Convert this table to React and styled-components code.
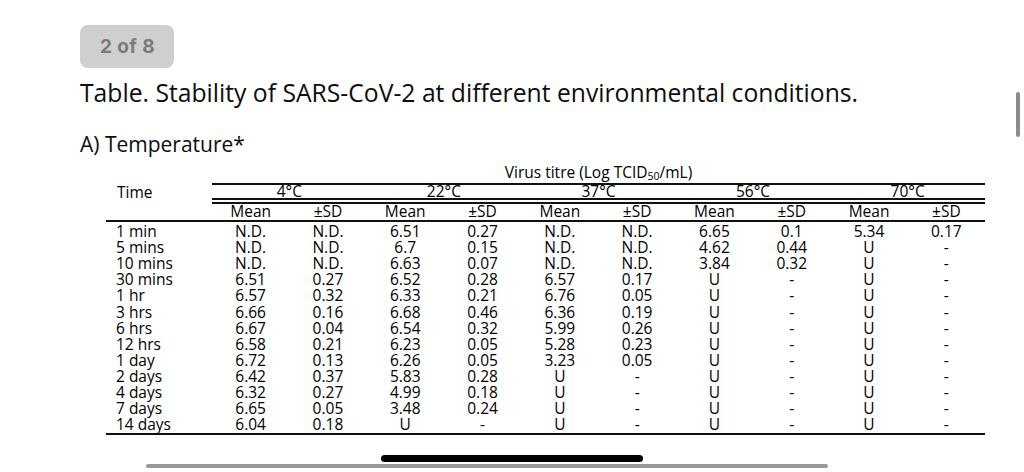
import React from "react";
import styled, { createGlobalStyle } from "styled-components";

const Global = createGlobalStyle`
  html, body { margin: 0; padding: 0; background: #ffffff; }
  * { box-sizing: border-box; }
`;

const Page = styled.div`
  position: relative;
  width: 1024px;
  height: 472px;
  overflow: hidden;
  background: #ffffff;
  padding: 25px 0 0 80px;
  font-family: "Open Sans", "Noto Sans", sans-serif;
  color: #0d0d0d;
`;

const Badge = styled.div`
  display: inline-flex;
  align-items: center;
  height: 43px;
  padding: 0 19px 0 20px;
  border-radius: 8px;
  background: #cfcfcf;
  color: #7b7b7b;
  font-family: Inter, "Liberation Sans", sans-serif;
  font-weight: 700;
  font-size: 19px;
  letter-spacing: 0.4px;
`;

const Title = styled.h1`
  margin: 8px 0 0 0;
  font-size: 24.7px;
  font-weight: 400;
  line-height: 33px;
  color: #0d0d0d;
`;

const Subtitle = styled.h2`
  margin: 20.5px 0 0 0;
  font-size: 21px;
  font-weight: 400;
  line-height: 28px;
  color: #0d0d0d;
`;

const Table = styled.div`
  margin: 5.2px 0 0 26px;
  width: 879px;
  font-size: 15.5px;
  color: #000000;
`;

const cols = "106px repeat(10, 77.3px)";

const TitreRow = styled.div`
  display: grid;
  grid-template-columns: 106px 1fr;
  height: 20.6px;
`;

const TitreCell = styled.div`
  border-bottom: 2px solid #111;
  text-align: center;
  line-height: 18.6px;
`;

const Sub = styled.sub`
  font-size: 10.5px;
  vertical-align: baseline;
  position: relative;
  top: 2px;
`;

const GroupRow = styled.div`
  display: grid;
  grid-template-columns: 106px repeat(5, 154.6px);
  height: 21px;
`;

const TimeHead = styled.div`
  padding: 2.5px 0 0 11px;
  line-height: 13px;
`;

const GroupCell = styled.div`
  border-bottom: 6px double #111;
  text-align: center;
  padding-top: 2px;
  line-height: 13px;
`;

const SubRow = styled.div`
  display: grid;
  grid-template-columns: ${cols};
  height: 17.7px;
  border-bottom: 2px solid #111;
  line-height: 15px;
  text-align: center;
`;

const Body = styled.div`
  padding-top: 1px;
  border-bottom: 2px solid #111;
`;

const DataRow = styled.div`
  display: grid;
  grid-template-columns: ${cols};
  height: 16.125px;
  line-height: 16.125px;
`;

const Cell = styled.div`
  text-align: ${(p) => (p.$left ? "left" : "center")};
  padding-left: ${(p) => (p.$left ? "10px" : "0")};
  white-space: nowrap;
`;

const SideIndicator = styled.div`
  position: absolute;
  left: 1016px;
  top: 92px;
  width: 4px;
  height: 45px;
  border-radius: 2px;
  background: #8c8c8c;
`;

const HomeBar = styled.div`
  position: absolute;
  left: 381px;
  top: 455px;
  width: 262px;
  height: 7px;
  border-radius: 4px;
  background: #000000;
`;

const ScrollBar = styled.div`
  position: absolute;
  left: 146px;
  top: 464px;
  width: 682px;
  height: 4px;
  border-radius: 2px;
  background: #999999;
`;

const groups = ["4°C", "22°C", "37°C", "56°C", "70°C"];

const rows = [
  ["1 min", "N.D.", "N.D.", "6.51", "0.27", "N.D.", "N.D.", "6.65", "0.1", "5.34", "0.17"],
  ["5 mins", "N.D.", "N.D.", "6.7", "0.15", "N.D.", "N.D.", "4.62", "0.44", "U", "-"],
  ["10 mins", "N.D.", "N.D.", "6.63", "0.07", "N.D.", "N.D.", "3.84", "0.32", "U", "-"],
  ["30 mins", "6.51", "0.27", "6.52", "0.28", "6.57", "0.17", "U", "-", "U", "-"],
  ["1 hr", "6.57", "0.32", "6.33", "0.21", "6.76", "0.05", "U", "-", "U", "-"],
  ["3 hrs", "6.66", "0.16", "6.68", "0.46", "6.36", "0.19", "U", "-", "U", "-"],
  ["6 hrs", "6.67", "0.04", "6.54", "0.32", "5.99", "0.26", "U", "-", "U", "-"],
  ["12 hrs", "6.58", "0.21", "6.23", "0.05", "5.28", "0.23", "U", "-", "U", "-"],
  ["1 day", "6.72", "0.13", "6.26", "0.05", "3.23", "0.05", "U", "-", "U", "-"],
  ["2 days", "6.42", "0.37", "5.83", "0.28", "U", "-", "U", "-", "U", "-"],
  ["4 days", "6.32", "0.27", "4.99", "0.18", "U", "-", "U", "-", "U", "-"],
  ["7 days", "6.65", "0.05", "3.48", "0.24", "U", "-", "U", "-", "U", "-"],
  ["14 days", "6.04", "0.18", "U", "-", "U", "-", "U", "-", "U", "-"],
];

export default function App() {
  return (
    <Page>
      <Global />
      <Badge>2 of 8</Badge>
      <Title>Table. Stability of SARS-CoV-2 at different environmental conditions.</Title>
      <Subtitle>A) Temperature*</Subtitle>
      <Table>
        <TitreRow>
          <div />
          <TitreCell>
            Virus titre (Log TCID<Sub>50</Sub>/mL)
          </TitreCell>
        </TitreRow>
        <GroupRow>
          <TimeHead>Time</TimeHead>
          {groups.map((g) => (
            <GroupCell key={g}>{g}</GroupCell>
          ))}
        </GroupRow>
        <SubRow>
          <div />
          {groups.map((g) => (
            <React.Fragment key={g}>
              <div>Mean</div>
              <div>±SD</div>
            </React.Fragment>
          ))}
        </SubRow>
        <Body>
          {rows.map((r) => (
            <DataRow key={r[0]}>
              {r.map((v, i) => (
                <Cell key={i} $left={i === 0}>
                  {v}
                </Cell>
              ))}
            </DataRow>
          ))}
        </Body>
      </Table>
      <SideIndicator />
      <HomeBar />
      <ScrollBar />
    </Page>
  );
}
